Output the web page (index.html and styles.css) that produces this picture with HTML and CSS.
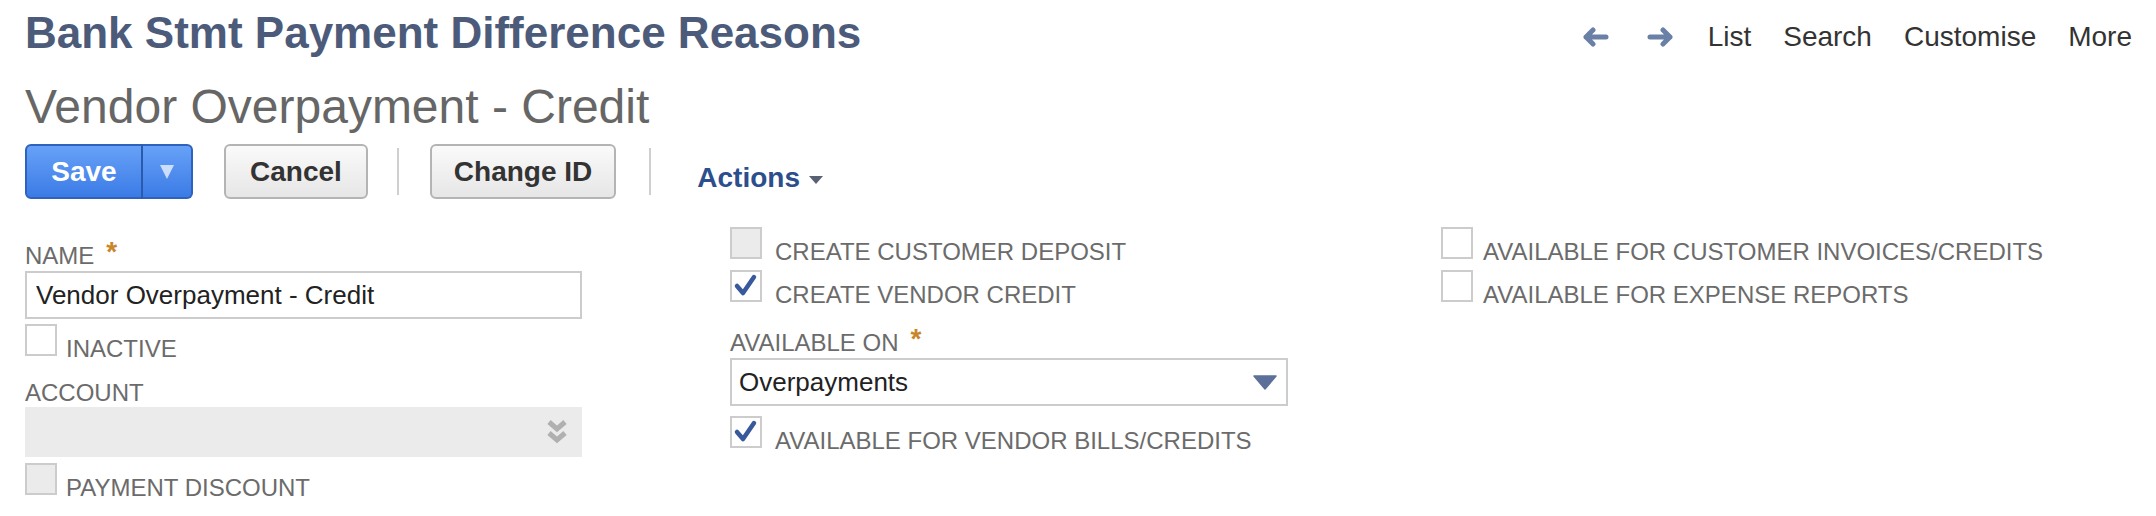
FILE: index.html
```html
<!DOCTYPE html>
<html lang="en">
<head>
    <meta charset="UTF-8">
    <meta name="viewport" content="width=device-width, initial-scale=1.0">
    <title>Bank Stmt Payment Difference Reasons</title>
    <link rel="stylesheet" href="styles.css">
</head>
<body>
    <header class="page-head">
        <h1 class="record-type">Bank Stmt Payment Difference Reasons</h1>
        <nav class="record-nav">
            <span class="nav-arrow">
                <svg width="28" height="22" viewBox="0 0 28 22"><path d="M25 11H5M12 4L5 11L12 18"/></svg>
            </span>
            <span class="nav-arrow next">
                <svg width="28" height="22" viewBox="0 0 28 22"><path d="M3 11H23M16 4L23 11L16 18"/></svg>
            </span>
            <a href="#">List</a>
            <a href="#">Search</a>
            <a href="#">Customise</a>
            <a href="#">More</a>
        </nav>
    </header>

    <h2 class="record-name">Vendor Overpayment - Credit</h2>

    <div class="toolbar">
        <div class="btn-split">
            <button class="btn btn-primary" type="button">Save</button>
            <button class="btn btn-primary btn-menu" type="button">
                <svg width="16" height="16" viewBox="0 0 16 16"><path d="M1 1H15L8 15Z"/></svg>
            </button>
        </div>
        <button class="btn" type="button">Cancel</button>
        <span class="tb-sep"></span>
        <button class="btn btn-change" type="button">Change ID</button>
        <span class="tb-sep"></span>
        <a class="actions" href="#">Actions
            <svg width="14" height="8" viewBox="0 0 14 8"><path d="M0 0H14L7 8Z"/></svg>
        </a>
    </div>

    <form class="record-form">
        <div class="col col-main">
            <label class="field-label" for="name">NAME<span class="req">*</span></label>
            <input class="text-input" type="text" id="name" value="Vendor Overpayment - Credit">

            <div class="check row-inactive">
                <span class="box"></span>
                <span class="check-label">INACTIVE</span>
            </div>

            <label class="field-label label-account">ACCOUNT</label>
            <div class="select select-disabled">
                <svg class="dbl-chevron" width="22" height="26" viewBox="0 0 22 26"><path d="M3 3L11 10L19 3M3 14L11 21L19 14"/></svg>
            </div>

            <div class="check row-discount">
                <span class="box disabled"></span>
                <span class="check-label">PAYMENT DISCOUNT</span>
            </div>
        </div>

        <div class="col col-mid">
            <div class="check">
                <span class="box disabled"></span>
                <span class="check-label">CREATE CUSTOMER DEPOSIT</span>
            </div>
            <div class="check next-row">
                <span class="box">
                    <svg class="tick" width="28" height="28" viewBox="0 0 28 28"><path d="M5 14L11 21L22 5"/></svg>
                </span>
                <span class="check-label">CREATE VENDOR CREDIT</span>
            </div>

            <label class="field-label label-avail">AVAILABLE ON<span class="req">*</span></label>
            <div class="select select-open">
                <span class="select-value">Overpayments</span>
                <svg class="tri" width="24" height="15" viewBox="0 0 24 15"><path d="M1 1H23L12 14Z"/></svg>
            </div>

            <div class="check row-vendor">
                <span class="box">
                    <svg class="tick" width="28" height="28" viewBox="0 0 28 28"><path d="M5 14L11 21L22 5"/></svg>
                </span>
                <span class="check-label">AVAILABLE FOR VENDOR BILLS/CREDITS</span>
            </div>
        </div>

        <div class="col col-side">
            <div class="check">
                <span class="box"></span>
                <span class="check-label">AVAILABLE FOR CUSTOMER INVOICES/CREDITS</span>
            </div>
            <div class="check next-row">
                <span class="box"></span>
                <span class="check-label">AVAILABLE FOR EXPENSE REPORTS</span>
            </div>
        </div>
    </form>
</body>
</html>
```

FILE: styles.css
```css
body {
    font-family: "Liberation Sans", Arial, Helvetica, sans-serif;
    margin: 0;
    padding: 0 24px 0 25px;
    background-color: #ffffff;
    color: #333;
}

/* page header */
.page-head {
    display: flex;
    justify-content: space-between;
    align-items: flex-start;
}
.record-type {
    margin: 7px 0 0;
    font-size: 44px;
    line-height: 52px;
    font-weight: bold;
    color: #4d5b7a;
}
.record-nav {
    display: flex;
    align-items: center;
    margin-top: 17px;
}
.record-nav a {
    font-size: 28px;
    line-height: 40px;
    color: #333;
    text-decoration: none;
    margin-left: 32px;
}
.record-nav a:first-of-type {
    margin-left: 33px;
}
.nav-arrow {
    display: flex;
    filter: blur(0.7px);
}
.nav-arrow.next {
    margin-left: 38px;
}
.nav-arrow path {
    fill: none;
    stroke: #6b80a6;
    stroke-width: 5;
    stroke-linecap: round;
    stroke-linejoin: round;
}

.record-name {
    margin: 20px 0 0;
    font-size: 48px;
    line-height: 56px;
    font-weight: normal;
    color: #666;
}

/* buttons */
.toolbar {
    display: flex;
    align-items: center;
    margin-top: 9px;
    height: 55px;
}
.btn {
    font-family: inherit;
    font-size: 28px;
    font-weight: bold;
    height: 55px;
    padding: 0 24px;
    border: 2px solid #b4b4b4;
    border-radius: 6px;
    background: linear-gradient(#fafafa, #e6e6e6);
    color: #333;
    margin-right: 29px;
}
.btn-change {
    padding: 0 22px;
    margin-right: 33px;
}
.btn-split {
    display: flex;
    margin-right: 31px;
}
.btn-split .btn {
    margin: 0;
}
.btn-primary {
    background: linear-gradient(#67a1f7, #3b7be6);
    border-color: #2f62bd;
    color: #fff;
    border-radius: 6px 0 0 6px;
    width: 118px;
}
.btn-menu {
    width: 52px;
    padding: 0;
    border-left: 2px solid #2a5aae;
    border-radius: 0 6px 6px 0;
    display: flex;
    align-items: center;
    justify-content: center;
    margin-left: -2px !important;
}
.btn-menu path {
    fill: rgba(255, 255, 255, 0.7);
}
.tb-sep {
    width: 2px;
    height: 47px;
    background-color: #cfcfcf;
    margin-right: 31px;
}
.tb-sep:last-of-type {
    margin-right: 46px;
}
.actions {
    font-size: 28px;
    font-weight: bold;
    color: #2d4e8d;
    text-decoration: none;
    margin-top: 12px;
    display: flex;
    align-items: center;
}
.actions svg {
    margin-left: 9px;
    margin-top: 4px;
}
.actions path {
    fill: #5a6175;
}

/* form */
.record-form {
    display: grid;
    grid-template-columns: 705px 711px 1fr;
    margin-top: 28px;
}
.col-main {
    padding-top: 15px;
}
.field-label {
    display: block;
    font-size: 24px;
    line-height: 28px;
    color: #6b6b6b;
}
.req {
    color: #c8862a;
    font-weight: bold;
    font-size: 28px;
    line-height: 20px;
    vertical-align: top;
    margin-left: 12px;
}
.text-input {
    display: block;
    box-sizing: border-box;
    width: 557px;
    height: 48px;
    margin: 1px 0 0;
    padding: 0 9px;
    border: 2px solid #cccccc;
    font-family: inherit;
    font-size: 26px;
    color: #222;
}

.check {
    display: flex;
    align-items: flex-start;
}
.next-row {
    margin-top: 4px;
}
.row-inactive {
    margin-top: 5px;
}
.row-discount {
    margin-top: 6px;
}
.row-vendor {
    margin-top: 10px;
}
.box {
    box-sizing: border-box;
    width: 32px;
    height: 32px;
    border: 2px solid #cccccc;
    background-color: #fff;
    display: flex;
}
.box.disabled {
    background-color: #ebebeb;
}
.tick path {
    fill: none;
    stroke: #38599c;
    stroke-width: 4.5;
    stroke-linecap: round;
    stroke-linejoin: round;
}
.check-label {
    font-size: 24px;
    line-height: 28px;
    color: #6b6b6b;
    margin: 11px 0 0 9px;
}
.col-mid .check-label {
    margin-left: 13px;
}
.col-side .check-label {
    margin-left: 10px;
}

.label-account {
    margin-top: 16px;
}
.label-avail {
    margin-top: 20px;
}
.select {
    box-sizing: border-box;
    display: flex;
    align-items: center;
    justify-content: space-between;
}
.select-disabled {
    width: 557px;
    height: 50px;
    background-color: #ebebeb;
    justify-content: flex-end;
    padding-right: 14px;
}
.dbl-chevron path {
    fill: none;
    stroke: #b0b0b0;
    stroke-width: 5;
}
.select-open {
    width: 558px;
    height: 48px;
    margin-top: 1px;
    border: 2px solid #cccccc;
    padding: 0 9px 0 7px;
}
.select-value {
    font-size: 26px;
    color: #222;
}
.tri path {
    fill: #5d7099;
    stroke: #5d7099;
    stroke-width: 1.5;
    stroke-linejoin: round;
}
```
